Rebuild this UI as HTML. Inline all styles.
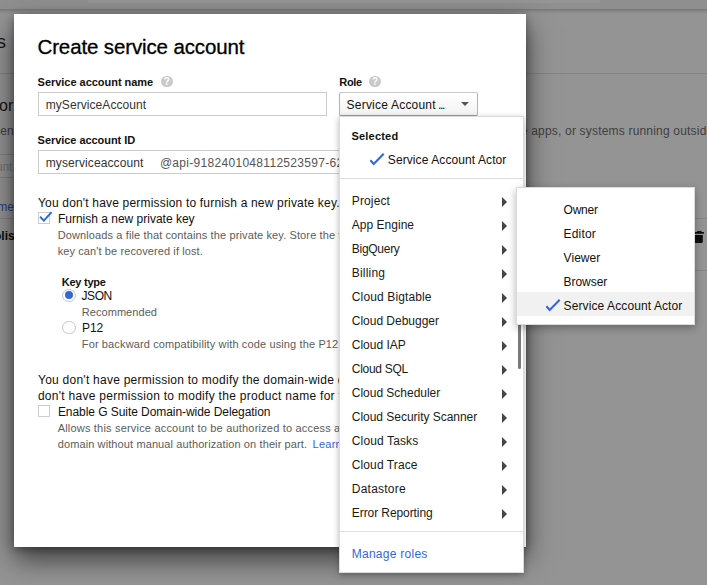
<!DOCTYPE html>
<html lang="en">
<head>
<meta charset="utf-8">
<title>Create service account</title>
<style>
html,body{margin:0;padding:0;}
body{width:707px;height:585px;overflow:hidden;position:relative;background:#949494;font-family:"Liberation Sans",Arial,sans-serif;font-size:12px;color:#212121;}
.abs,.t{position:absolute;}
.t{white-space:pre;}
.hdr{left:-20px;top:0;width:750px;height:9px;background:#8f8f8f;box-shadow:0 1px 4px rgba(0,0,0,.3);}
.hdrsearch{left:88px;top:0;width:512px;height:2.5px;background:#959595;border-radius:0 0 1px 1px;}
.bgline{height:1px;background:#858585;}
.dlg{left:14px;top:14px;width:512px;height:533px;background:#fff;box-shadow:0 12px 26px rgba(0,0,0,.6),0 2px 8px rgba(0,0,0,.32);}
.inp{height:22px;border:1px solid #ccc;background:#fff;box-sizing:content-box;}
.help{width:11.5px;height:11.5px;border-radius:50%;background:#c9c9c9;color:#fff;font-size:10px;font-weight:700;line-height:12px;text-align:center;}
.cb{width:10px;height:10px;border:1px solid #cdcdcd;background:#fff;}
.radio{width:11.4px;height:11.4px;border:1px solid #c6c6c6;border-radius:50%;background:#fff;}
.dot{width:8px;height:8px;border-radius:50%;background:#3367d6;}
.selbtn{left:339px;top:92px;width:137px;height:22px;border:1px solid #b4b4b4;border-top-color:#c8c8c8;border-bottom-color:#9c9c9c;border-radius:2px;background:linear-gradient(#fff,#f3f3f3);box-shadow:0 1px 1px rgba(0,0,0,.14);}
.caret{width:0;height:0;border-left:4px solid transparent;border-right:4px solid transparent;border-top:4px solid #555;}
.panel{left:339px;top:116px;width:183px;height:455px;background:#fff;border:1px solid rgba(0,0,0,.14);box-shadow:0 2px 6px rgba(0,0,0,.3);}
.sep{height:1px;background:#e0e0e0;}
.arrow{width:0;height:0;border-top:5px solid transparent;border-bottom:5px solid transparent;border-left:5px solid #444;}
.thumb{left:518px;top:290px;width:3px;height:79px;background:#7a7a7a;border-radius:2px;}
.sub{left:516px;top:187px;width:177px;height:136px;background:#fff;border:1px solid rgba(0,0,0,.14);box-shadow:0 3px 8px rgba(0,0,0,.3);}
.hl{left:517px;top:292px;width:177px;height:24px;background:#f1f1f1;}
</style>
</head>
<body>
<!-- page behind the overlay -->
<div class="abs hdr"></div>
<div class="abs hdrsearch"></div>
<div class="abs bgline" style="left:0;top:73px;width:707px;"></div>
<div class="abs bgline" style="left:0;top:218px;width:707px;"></div>
<div class="abs bgline" style="left:600px;top:270px;width:107px;"></div>
<span class="t" style="left:-3.6px;top:28px;font-size:19px;line-height:28px;color:#151515;">s</span>
<span class="t" style="left:-1px;top:95px;font-size:16px;line-height:22px;color:#151515;">or</span>
<span class="t" style="left:-5.8px;top:123px;font-size:12px;line-height:16px;color:#404040;">sen</span>
<div class="abs" style="left:-20px;top:154px;width:60px;height:22px;border:1px solid #828282;"></div>
<span class="t" style="left:-4.3px;top:159px;font-size:12px;line-height:16px;color:#727272;">unt</span>
<span class="t" style="left:-2.8px;top:199px;font-size:12px;line-height:16px;color:#24418a;">me</span>
<span class="t" style="left:-6px;top:228px;font-size:12px;line-height:16px;font-weight:700;color:#0c0c0c;">olis</span>
<span class="t" style="left:520.8px;top:123px;font-size:12px;line-height:16px;letter-spacing:0.19px;color:#404040;">e apps, or systems running outside</span>
<svg class="abs" style="left:693px;top:230px" width="12" height="14" viewBox="0 0 12 14"><path fill="#0e0e0e" d="M0.5 2h3.5l.6-.9h3.6l.6.9h2.1v1.8H.5zM1.3 4.9h8.5v6.9a1.1 1.1 0 0 1-1.1 1.1H2.4a1.1 1.1 0 0 1-1.1-1.1z"/></svg>

<!-- dialog -->
<div class="abs dlg"></div>
<div class="abs help" style="left:161px;top:75.7px;">?</div>
<div class="abs help" style="left:369.3px;top:75.7px;">?</div>
<div class="abs inp" style="left:38px;top:92px;width:287px;"></div>
<div class="abs inp" style="left:38px;top:150px;width:320px;"></div>
<div class="abs cb" style="left:38px;top:212px;"></div>
<svg class="abs" style="left:38px;top:208px" width="16" height="16" viewBox="0 0 16 16"><path d="M2.1 8.7L5.9 12.6L13.6 4.1" fill="none" stroke="#3367d6" stroke-width="2"/></svg>
<div class="abs radio" style="left:62.2px;top:288.6px;"></div>
<div class="abs dot" style="left:64.9px;top:291px;"></div>
<div class="abs radio" style="left:62.2px;top:320.6px;"></div>
<div class="abs cb" style="left:38px;top:405px;"></div>
<span class="t" style="left:37.5px;top:33px;font-size:20.5px;line-height:28px;letter-spacing:-0.13px;color:#000;-webkit-text-stroke:0.3px #000;">Create service account</span>
<span class="t" style="left:37.6px;top:74px;font-size:11px;line-height:16px;letter-spacing:-0.03px;color:#111;font-weight:700;">Service account name</span>
<span class="t" style="left:339.3px;top:74px;font-size:11px;line-height:16px;letter-spacing:-0.32px;color:#111;font-weight:700;">Role</span>
<span class="t" style="left:45.7px;top:97px;font-size:12px;line-height:16px;letter-spacing:0.07px;color:#333;">myServiceAccount</span>
<span class="t" style="left:37.6px;top:132px;font-size:11px;line-height:16px;letter-spacing:-0.05px;color:#111;font-weight:700;">Service account ID</span>
<span class="t" style="left:45.7px;top:155px;font-size:12px;line-height:16px;letter-spacing:0.11px;color:#333;">myserviceaccount</span>
<span class="t" style="left:159.9px;top:155px;font-size:12px;line-height:16px;letter-spacing:0.30px;color:#555;">@api-9182401048112523597-628745</span>
<span class="t" style="left:38.0px;top:195px;font-size:12px;line-height:16px;letter-spacing:0.18px;color:#111;">You don't have permission to furnish a new private key.</span>
<span class="t" style="left:57.9px;top:211px;font-size:12px;line-height:16px;letter-spacing:-0.00px;color:#111;">Furnish a new private key</span>
<span class="t" style="left:57.7px;top:227px;font-size:11px;line-height:16px;letter-spacing:0.12px;color:#5c5c5c;">Downloads a file that contains the private key. Store the file securely because this</span>
<span class="t" style="left:57.7px;top:243px;font-size:11px;line-height:16px;letter-spacing:0.10px;color:#5c5c5c;">key can't be recovered if lost.</span>
<span class="t" style="left:61.7px;top:274px;font-size:11px;line-height:16px;letter-spacing:-0.23px;color:#111;font-weight:700;">Key type</span>
<span class="t" style="left:81.5px;top:288px;font-size:12px;line-height:16px;letter-spacing:-0.42px;color:#111;">JSON</span>
<span class="t" style="left:81.7px;top:304px;font-size:11px;line-height:16px;letter-spacing:0.07px;color:#5c5c5c;">Recommended</span>
<span class="t" style="left:81.9px;top:320px;font-size:12px;line-height:16px;letter-spacing:0.00px;color:#111;">P12</span>
<span class="t" style="left:81.8px;top:336px;font-size:11px;line-height:16px;letter-spacing:0.13px;color:#5c5c5c;">For backward compatibility with code using the P12 format</span>
<span class="t" style="left:38.0px;top:372px;font-size:12px;line-height:16px;letter-spacing:0.25px;color:#111;">You don't have permission to modify the domain-wide delegation setting. You</span>
<span class="t" style="left:37.9px;top:388px;font-size:12px;line-height:16px;letter-spacing:0.28px;color:#111;">don't have permission to modify the product name for the consent screen.</span>
<span class="t" style="left:57.9px;top:404px;font-size:12px;line-height:16px;letter-spacing:-0.06px;color:#111;">Enable G Suite Domain-wide Delegation</span>
<span class="t" style="left:57.7px;top:420px;font-size:11px;line-height:16px;letter-spacing:0.19px;color:#5c5c5c;">Allows this service account to be authorized to access all users data on a G Suite</span>
<span class="t" style="left:57.7px;top:436px;font-size:11px;line-height:16px;letter-spacing:0.11px;color:#5c5c5c;">domain without manual authorization on their part.</span>
<span class="t" style="left:312.6px;top:436px;font-size:11px;line-height:16px;letter-spacing:0.25px;color:#3367d6;">Learn more</span>

<!-- role select + menu -->
<div class="abs selbtn"></div>
<div class="abs caret" style="left:461.4px;top:102.3px;"></div>
<div class="abs panel"></div>
<div class="abs sep" style="left:340px;top:178px;width:183px;"></div>
<div class="abs sep" style="left:340px;top:531px;width:183px;"></div>
<svg class="abs" style="left:368px;top:151px" width="18" height="16" viewBox="0 0 18 16"><path d="M2.4 9.2L5.7 13L15.7 2.8" fill="none" stroke="#3367d6" stroke-width="2.1"/></svg>
<div class="abs arrow" style="left:502px;top:196.5px;"></div>
<div class="abs arrow" style="left:502px;top:220.5px;"></div>
<div class="abs arrow" style="left:502px;top:244.5px;"></div>
<div class="abs arrow" style="left:502px;top:268.5px;"></div>
<div class="abs arrow" style="left:502px;top:292.5px;"></div>
<div class="abs arrow" style="left:502px;top:316.5px;"></div>
<div class="abs arrow" style="left:502px;top:340.5px;"></div>
<div class="abs arrow" style="left:502px;top:364.5px;"></div>
<div class="abs arrow" style="left:502px;top:388.5px;"></div>
<div class="abs arrow" style="left:502px;top:412.5px;"></div>
<div class="abs arrow" style="left:502px;top:436.5px;"></div>
<div class="abs arrow" style="left:502px;top:460.5px;"></div>
<div class="abs arrow" style="left:502px;top:484.5px;"></div>
<div class="abs arrow" style="left:502px;top:508.5px;"></div>
<div class="abs thumb"></div>
<div class="abs sub"></div>
<div class="abs hl"></div>
<svg class="abs" style="left:544px;top:297px" width="18" height="16" viewBox="0 0 18 16"><path d="M2.4 9.2L5.7 13L15.7 2.8" fill="none" stroke="#3367d6" stroke-width="2.1"/></svg>
<span class="t" style="left:346.6px;top:97px;font-size:12px;line-height:16px;letter-spacing:0.21px;color:#111;">Service Account</span>
<span class="t" style="left:438.0px;top:97px;font-size:12px;line-height:16px;letter-spacing:-1.38px;color:#111;">...</span>
<span class="t" style="left:351.4px;top:128px;font-size:11px;line-height:16px;letter-spacing:0.22px;color:#111;font-weight:700;">Selected</span>
<span class="t" style="left:387.8px;top:152px;font-size:12px;line-height:16px;letter-spacing:0.09px;color:#111;">Service Account Actor</span>
<span class="t" style="left:351.8px;top:193px;font-size:12px;line-height:16px;letter-spacing:0.13px;color:#1a1a1a;">Project</span>
<span class="t" style="left:351.8px;top:217px;font-size:12px;line-height:16px;letter-spacing:0.02px;color:#1a1a1a;">App Engine</span>
<span class="t" style="left:351.8px;top:241px;font-size:12px;line-height:16px;letter-spacing:-0.28px;color:#1a1a1a;">BigQuery</span>
<span class="t" style="left:351.8px;top:265px;font-size:12px;line-height:16px;letter-spacing:0.19px;color:#1a1a1a;">Billing</span>
<span class="t" style="left:351.8px;top:289px;font-size:12px;line-height:16px;letter-spacing:0.13px;color:#1a1a1a;">Cloud Bigtable</span>
<span class="t" style="left:351.8px;top:313px;font-size:12px;line-height:16px;letter-spacing:-0.02px;color:#1a1a1a;">Cloud Debugger</span>
<span class="t" style="left:351.8px;top:337px;font-size:12px;line-height:16px;letter-spacing:-0.01px;color:#1a1a1a;">Cloud IAP</span>
<span class="t" style="left:351.8px;top:361px;font-size:12px;line-height:16px;letter-spacing:-0.28px;color:#1a1a1a;">Cloud SQL</span>
<span class="t" style="left:351.8px;top:385px;font-size:12px;line-height:16px;letter-spacing:-0.02px;color:#1a1a1a;">Cloud Scheduler</span>
<span class="t" style="left:351.8px;top:409px;font-size:12px;line-height:16px;letter-spacing:-0.03px;color:#1a1a1a;">Cloud Security Scanner</span>
<span class="t" style="left:351.8px;top:433px;font-size:12px;line-height:16px;letter-spacing:0.13px;color:#1a1a1a;">Cloud Tasks</span>
<span class="t" style="left:351.8px;top:457px;font-size:12px;line-height:16px;letter-spacing:0.10px;color:#1a1a1a;">Cloud Trace</span>
<span class="t" style="left:351.8px;top:481px;font-size:12px;line-height:16px;letter-spacing:0.22px;color:#1a1a1a;">Datastore</span>
<span class="t" style="left:351.8px;top:505px;font-size:12px;line-height:16px;letter-spacing:-0.08px;color:#1a1a1a;">Error Reporting</span>
<span class="t" style="left:351.7px;top:546px;font-size:12px;line-height:16px;letter-spacing:0.27px;color:#3367d6;">Manage roles</span>
<span class="t" style="left:563.6px;top:202px;font-size:12px;line-height:16px;letter-spacing:-0.25px;color:#111;">Owner</span>
<span class="t" style="left:563.6px;top:226px;font-size:12px;line-height:16px;letter-spacing:0.16px;color:#111;">Editor</span>
<span class="t" style="left:563.6px;top:250px;font-size:12px;line-height:16px;letter-spacing:0.04px;color:#111;">Viewer</span>
<span class="t" style="left:563.6px;top:274px;font-size:12px;line-height:16px;letter-spacing:-0.06px;color:#111;">Browser</span>
<span class="t" style="left:563.6px;top:298px;font-size:12px;line-height:16px;letter-spacing:0.10px;color:#111;">Service Account Actor</span>
</body>
</html>
